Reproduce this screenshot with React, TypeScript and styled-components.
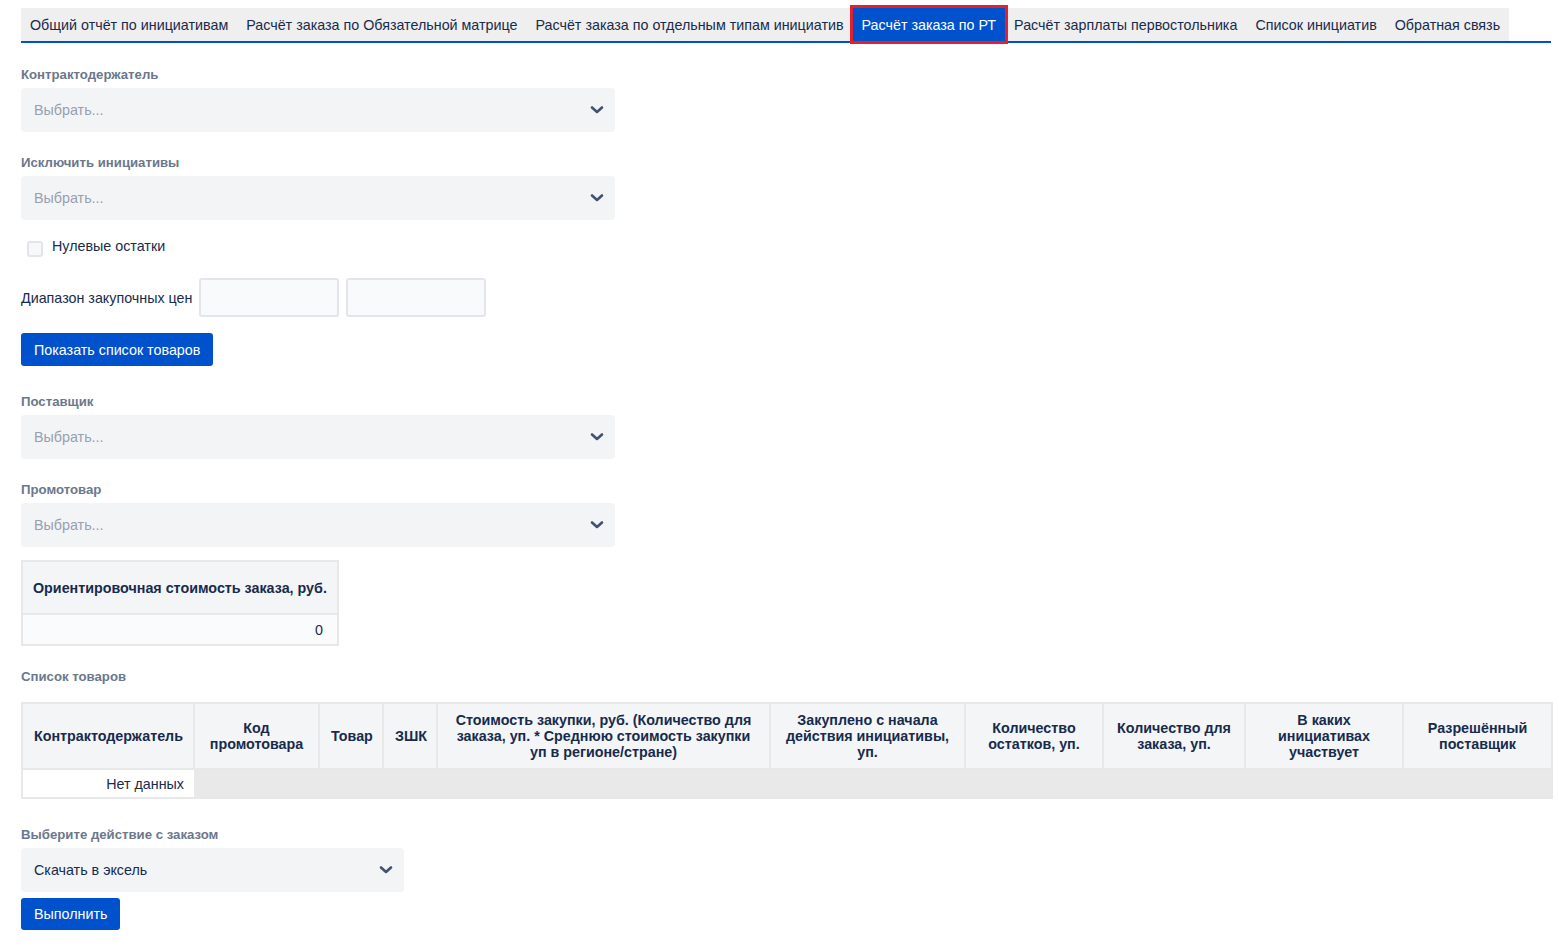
import React from 'react';
import styled, { createGlobalStyle } from 'styled-components';

const GlobalStyle = createGlobalStyle`
  body {
    margin: 0;
    background: #ffffff;
    font-family: "Liberation Sans", Arial, sans-serif;
    color: #172b4d;
  }
`;

const Page = styled.div`
  display: flex;
  flex-direction: column;
  align-items: flex-start;
  padding: 8px 8px 20px 21px;
`;

const TabBar = styled.div`
  display: flex;
  align-self: stretch;
  border-bottom: 2px solid #0052cc;
`;

const Tab = styled.div<{ $active?: boolean }>`
  height: 33px;
  display: flex;
  align-items: center;
  padding: 0 9px;
  font-size: 14.3px;
  white-space: nowrap;
  background: ${(p) => (p.$active ? '#0052cc' : '#efefef')};
  color: ${(p) => (p.$active ? '#ffffff' : '#172b4d')};
  outline: ${(p) => (p.$active ? '3px solid #e5202e' : 'none')};
  position: relative;
  z-index: ${(p) => (p.$active ? 1 : 0)};
`;

const Field = styled.div<{ $top: number; $width?: number }>`
  display: flex;
  flex-direction: column;
  gap: 5px;
  margin-top: ${(p) => p.$top}px;
  width: ${(p) => p.$width ?? 594}px;
`;

const Label = styled.div<{ $top?: number }>`
  font-size: 13.2px;
  line-height: 17px;
  font-weight: 700;
  color: #6b778c;
  margin-top: ${(p) => p.$top ?? 0}px;
`;

const SelectBox = styled.div<{ $filled?: boolean }>`
  height: 44px;
  border-radius: 4px;
  background: #f3f4f6;
  display: flex;
  align-items: center;
  justify-content: space-between;
  padding: 0 11px 0 13px;
  font-size: 14.3px;
  color: ${(p) => (p.$filled ? '#172b4d' : '#97a0af')};
`;

const CheckRow = styled.label`
  display: flex;
  align-items: flex-start;
  gap: 9px;
  margin-top: 18px;
  font-size: 14.3px;
  line-height: 16px;
  color: #172b4d;
`;

const CheckBox = styled.span`
  width: 12px;
  height: 12px;
  margin: 3px 0 0 6px;
  border: 2px solid #e3e5ea;
  border-radius: 3px;
  background: #f7f8fa;
`;

const RangeRow = styled.div`
  display: flex;
  align-items: center;
  gap: 7px;
  margin-top: 21px;
  font-size: 14.3px;
  line-height: 16px;
  color: #172b4d;
`;

const NumInput = styled.div`
  width: 136px;
  height: 35px;
  border: 2px solid #e3e5ea;
  border-radius: 3px;
  background: #f9fafb;
`;

const Button = styled.button<{ $top: number; $height?: number }>`
  margin-top: ${(p) => p.$top}px;
  height: ${(p) => p.$height ?? 33}px;
  padding: 0 13px;
  border: none;
  border-radius: 3px;
  background: #0052cc;
  color: #ffffff;
  font-family: "Liberation Sans", Arial, sans-serif;
  font-size: 14.3px;
  cursor: pointer;
`;

const CostTable = styled.table`
  margin-top: 13px;
  border-collapse: collapse;
  border: 2px solid #e8e8e8;
  font-size: 14.3px;

  th {
    height: 51px;
    padding: 0 10px;
    background: #f4f5f7;
    font-weight: 700;
    border-bottom: 2px solid #e8e8e8;
    color: #172b4d;
  }

  td {
    height: 29px;
    padding: 0 14px;
    text-align: right;
    background: #fafbfc;
    color: #172b4d;
  }
`;

const GoodsTable = styled.table`
  margin-top: 17px;
  width: 1530px;
  border-collapse: collapse;
  table-layout: fixed;
  border: 2px solid #e8e8e8;
  font-size: 14.3px;

  th {
    height: 64px;
    padding: 0 11px;
    background: #f4f5f7;
    border-right: 2px solid #e8e8e8;
    border-bottom: 2px solid #e8e8e8;
    font-weight: 700;
    line-height: 16px;
    text-align: center;
    color: #172b4d;
  }
`;

const EmptyCell = styled.td<{ $filler?: boolean }>`
  height: 27px;
  padding: 0 10px;
  line-height: 16px;
  text-align: right;
  background: ${(p) => (p.$filler ? '#e9e9e9' : '#ffffff')};
  color: #172b4d;
`;

const Chevron = () => (
  <svg width="14" height="10" viewBox="0 0 14 10">
    <path d="M2 2.5 L7 7 L12 2.5" fill="none" stroke="#42526e" strokeWidth="2.6" strokeLinecap="round" strokeLinejoin="round" />
  </svg>
);

const tabs = [
  'Общий отчёт по инициативам',
  'Расчёт заказа по Обязательной матрице',
  'Расчёт заказа по отдельным типам инициатив',
  'Расчёт заказа по РТ',
  'Расчёт зарплаты первостольника',
  'Список инициатив',
  'Обратная связь',
];

const columns: [string, number][] = [
  ['Контрактодержатель', 172],
  ['Код промотовара', 125],
  ['Товар', 64],
  ['ЗШК', 54],
  ['Стоимость закупки, руб. (Количество для заказа, уп. * Среднюю стоимость закупки уп в регионе/стране)', 333],
  ['Закуплено с начала действия инициативы, уп.', 195],
  ['Количество остатков, уп.', 138],
  ['Количество для заказа, уп.', 142],
  ['В каких инициативах участвует', 158],
  ['Разрешённый поставщик', 149],
];

const Select = ({ label, top, value, width }: { label: string; top: number; value?: string; width?: number }) => (
  <Field $top={top} $width={width}>
    <Label>{label}</Label>
    <SelectBox $filled={!!value}>
      <span>{value ?? 'Выбрать...'}</span>
      <Chevron />
    </SelectBox>
  </Field>
);

export default function App() {
  return (
    <Page>
      <GlobalStyle />
      <TabBar>
        {tabs.map((t, i) => (
          <Tab key={t} $active={i === 3}>
            {t}
          </Tab>
        ))}
      </TabBar>

      <Select label="Контрактодержатель" top={23} />
      <Select label="Исключить инициативы" top={22} />

      <CheckRow>
        <CheckBox />
        Нулевые остатки
      </CheckRow>

      <RangeRow>
        <span>Диапазон закупочных цен</span>
        <NumInput />
        <NumInput />
      </RangeRow>

      <Button $top={16}>Показать список товаров</Button>

      <Select label="Поставщик" top={27} />
      <Select label="Промотовар" top={22} />

      <CostTable>
        <thead>
          <tr>
            <th>Ориентировочная стоимость заказа, руб.</th>
          </tr>
        </thead>
        <tbody>
          <tr>
            <td>0</td>
          </tr>
        </tbody>
      </CostTable>

      <Label $top={22}>Список товаров</Label>

      <GoodsTable>
        <colgroup>
          {columns.map(([name, w]) => (
            <col key={name} style={{ width: w }} />
          ))}
        </colgroup>
        <thead>
          <tr>
            {columns.map(([name]) => (
              <th key={name}>{name}</th>
            ))}
          </tr>
        </thead>
        <tbody>
          <tr>
            <EmptyCell>Нет данных</EmptyCell>
            <EmptyCell $filler colSpan={9} />
          </tr>
        </tbody>
      </GoodsTable>

      <Select label="Выберите действие с заказом" top={27} value="Скачать в эксель" width={383} />

      <Button $top={6} $height={32}>Выполнить</Button>
    </Page>
  );
}
